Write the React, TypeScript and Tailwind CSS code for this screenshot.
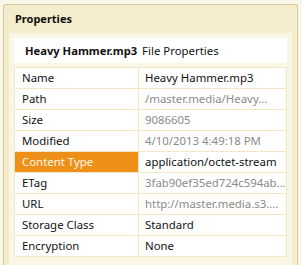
import React from "react";

const rows: { label: string; value: string; grey?: boolean; active?: boolean }[] = [
  { label: "Name", value: "Heavy Hammer.mp3" },
  { label: "Path", value: "/master.media/Heavy...", grey: true },
  { label: "Size", value: "9086605", grey: true },
  { label: "Modified", value: "4/10/2013 4:49:18 PM", grey: true },
  { label: "Content Type", value: "application/octet-stream", active: true },
  { label: "ETag", value: "3fab90ef35ed724c594ab...", grey: true },
  { label: "URL", value: "http://master.media.s3....", grey: true },
  { label: "Storage Class", value: "Standard" },
  { label: "Encryption", value: "None" },
];

export default function App() {
  return (
    <div
      className="w-[302px] h-[265px] bg-[#f9f6ea] pt-[4px] pl-[3px] overflow-hidden text-[11.4px] text-[#111]"
      style={{ fontFamily: '"Noto Sans", "Open Sans", sans-serif' }}
    >
      <div className="w-[295px] h-[261px] border border-b-0 border-[#d7ca98] rounded-t-[3px] bg-[#f4ecca] flex flex-col">
        <div className="h-[28px] flex items-center pl-[11px] font-bold leading-none pb-[1px] text-[11px]">Properties</div>
        <div className="flex-1 mx-[5px] bg-[#faf6e6] px-[5px] pt-[5px]">
          <div className="h-[25px] bg-white flex items-center pl-[11px] gap-[5px] leading-none">
            <span className="font-bold text-[11.2px]">Heavy Hammer.mp3</span>
            <span>File Properties</span>
          </div>
          <div className="mt-[4px] border border-b-0 border-[#f3e7c5] bg-white">
            {rows.map((r) => (
              <div key={r.label} className="grid grid-cols-[124px_1fr] h-[21px] border-b border-[#f3e7c5]">
                <div
                  className={
                    r.active
                      ? "border-r border-[#f3e7c5] bg-[#ee8f17] text-[#fff8ec] pl-[7px] flex items-center leading-none whitespace-nowrap"
                      : "border-r border-[#f3e7c5] pl-[7px] flex items-center leading-none whitespace-nowrap"
                  }
                >
                  {r.label}
                </div>
                <div
                  className={
                    r.grey
                      ? "pl-[6px] flex items-center leading-none whitespace-nowrap overflow-hidden text-[#8a8a8a]"
                      : "pl-[6px] flex items-center leading-none whitespace-nowrap overflow-hidden text-[#111]"
                  }
                >
                  {r.value}
                </div>
              </div>
            ))}
          </div>
        </div>
      </div>
    </div>
  );
}
